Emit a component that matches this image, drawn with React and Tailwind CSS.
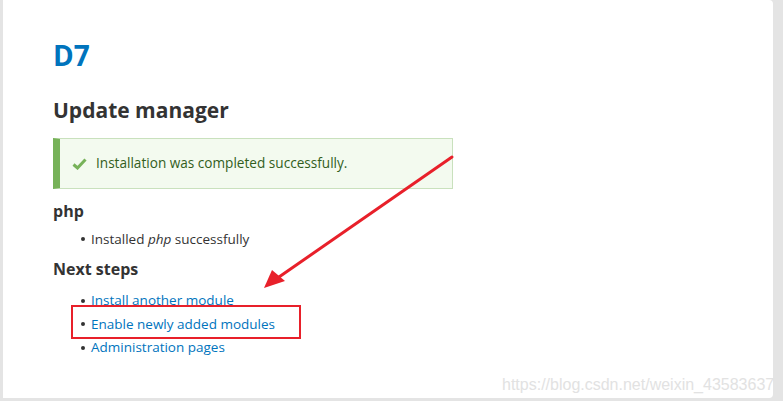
export default function App() {
  const links = ['Install another module', 'Enable newly added modules', 'Administration pages'];

  return (
    <div className="relative w-[783px] h-[401px] overflow-hidden bg-[#e4e4e4] pl-[3px] pr-[10px] pb-[3px]" style={{ fontFamily: '"Open Sans", "Noto Sans", sans-serif' }}>
      <div className="h-[398px] bg-white rounded-br-[4px] rounded-tr-[4px] pl-[50px] pt-[38px] text-[#333]">
        <h1 className="text-[28px] leading-[34px] font-bold text-[#0074bd]">D7</h1>
        <h2 className="mt-[23px] text-[21px] leading-[30px] font-bold text-[#333]">Update manager</h2>

        <div className="mt-[13px] w-[400px] h-[51px] flex items-center bg-[#f3faef] border border-[#c9e1bd] border-l-[7px] border-l-[#77b259] pl-[12px]">
          <svg width="15" height="12" viewBox="0 0 15 12" className="mr-[9px]">
            <path d="M1.5 6.5 L5.5 10 L13.5 1.5" fill="none" stroke="#77b259" strokeWidth="3" />
          </svg>
          <span className="text-[13.6px] text-[#325e1c]">Installation was completed successfully.</span>
        </div>

        <h3 className="mt-[10px] text-[16px] leading-[24px] font-bold">php</h3>
        <ul className="mt-[6px] pl-[28px] text-[13.5px] leading-[20px]">
          <li className="flex items-center">
            <span className="w-[4px] h-[4px] rounded-full bg-[#333] mr-[6px]" />
            <span>Installed <em>php</em> successfully</span>
          </li>
        </ul>

        <h3 className="mt-[8px] text-[16px] leading-[24px] font-bold">Next steps</h3>
        <ul className="mt-[8px] pl-[28px] text-[13.5px] leading-[23.5px]">
          {links.map((l) => (
            <li key={l} className="flex items-center">
              <span className="w-[4px] h-[4px] rounded-full bg-[#333] mr-[6px]" />
              <a className="text-[#0074bd]">{l}</a>
            </li>
          ))}
        </ul>
      </div>

      <div className="absolute left-[71px] top-[305px] w-[230px] h-[34px] border-[2px] border-[#e8202a]" />

      <svg className="absolute left-0 top-0" width="783" height="401">
        <line x1="452" y1="157" x2="279" y2="277" stroke="#e8202a" strokeWidth="3" strokeLinecap="round" />
        <path d="M264 288 L272 270 L285 281 Z" fill="#e8202a" />
      </svg>

      <div className="absolute left-[502px] top-[373px] text-[16px] text-[#e2e2e2]" style={{ fontFamily: '"Liberation Sans", Arial, sans-serif' }}>
        https://blog.csdn.net/weixin_43583637
      </div>
    </div>
  );
}
